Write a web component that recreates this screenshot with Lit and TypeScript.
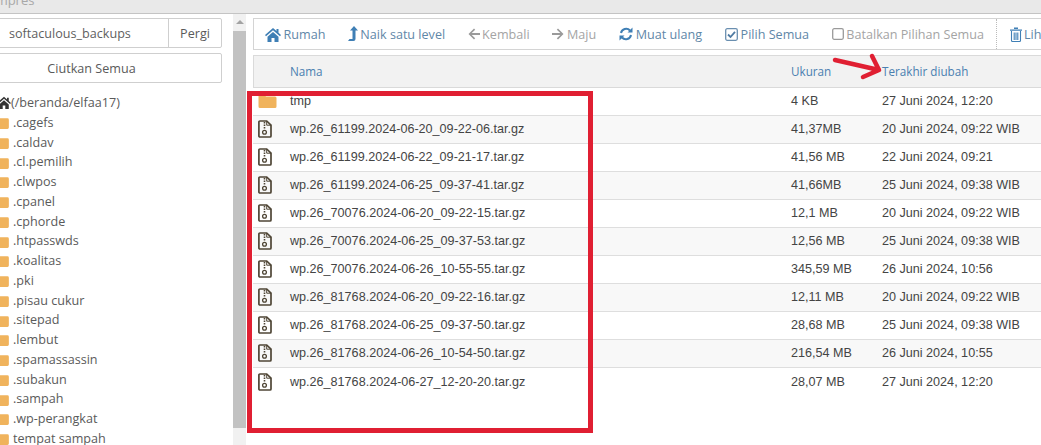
import { LitElement, html, css, svg } from "lit";
import { customElement } from "lit/decorators.js";

const folders = [".cagefs",".caldav",".cl.pemilih",".clwpos",".cpanel",".cphorde",".htpasswds",".koalitas",".pki",".pisau cukur",".sitepad",".lembut",".spamassassin",".subakun",".sampah",".wp-perangkat","tempat sampah"];
const files: [string,string,string][] = [
["wp.26_61199.2024-06-20_09-22-06.tar.gz","41,37MB","20 Juni 2024, 09:22 WIB"],
["wp.26_61199.2024-06-22_09-21-17.tar.gz","41,56 MB","22 Juni 2024, 09:21"],
["wp.26_61199.2024-06-25_09-37-41.tar.gz","41,66MB","25 Juni 2024, 09:38 WIB"],
["wp.26_70076.2024-06-20_09-22-15.tar.gz","12,1 MB","20 Juni 2024, 09:22 WIB"],
["wp.26_70076.2024-06-25_09-37-53.tar.gz","12,56 MB","25 Juni 2024, 09:38 WIB"],
["wp.26_70076.2024-06-26_10-55-55.tar.gz","345,59 MB","26 Juni 2024, 10:56"],
["wp.26_81768.2024-06-20_09-22-16.tar.gz","12,11 MB","20 Juni 2024, 09:22 WIB"],
["wp.26_81768.2024-06-25_09-37-50.tar.gz","28,68 MB","25 Juni 2024, 09:38 WIB"],
["wp.26_81768.2024-06-26_10-54-50.tar.gz","216,54 MB","26 Juni 2024, 10:55"],
["wp.26_81768.2024-06-27_12-20-20.tar.gz","28,07 MB","27 Juni 2024, 12:20"],
];

const folderIcon = (w:number,h:number)=>html`<svg class="fi" width=${w} height=${h} viewBox="0 0 18 14"><path fill="#f0b35c" d="M0 2a1.500 1.500 0 0 1 1.500-1.500h4L7.500 2.500H16.500A1.500 1.500 0 0 1 18 4v8.500A1.500 1.500 0 0 1 16.500 14H1.500A1.500 1.500 0 0 1 0 12.500Z"/></svg>`;
const zipIcon = html`<svg class="fi" width="14" height="18" viewBox="0 0 14 18"><path fill="none" stroke="#4f4636" stroke-width="1.700" d="M1.900 1h6.800l4.300 4.200V16a1 1 0 0 1-1 1H1.900a1 1 0 0 1-1-1V2a1 1 0 0 1 1-1Z"/><path fill="none" stroke="#4f4636" stroke-width="1" d="M8.700 1v4.200H13"/><path stroke="#4f4636" stroke-width="1.600" stroke-dasharray="1.500 1" d="M6.500 2v7"/><circle cx="6.500" cy="12.300" r="1.900" fill="none" stroke="#4f4636" stroke-width="1.300"/></svg>`;

const blue = "#3f7fb5";
const I = (w:number,h:number,vb:string,c:string,body:any)=>html`<svg class="fi" width=${w} height=${h} viewBox=${vb} fill=${c}>${body}</svg>`;
const homePath = svg`<path d="M8 1 0 8l1 1.200L8 3.200l7 6 1-1.200-2.500-2.200V2h-2v2L8 1ZM2.500 9.800V15h4v-4h3v4h4V9.800L8 5 2.500 9.800Z"/>`;
const icons = {
  home: I(16,15,"0 0 16 15",blue,homePath),
  up: I(10,16,"0 0 10 16",blue,svg`<path d="M6 0 10 4.500H7.500V13a2 2 0 0 1-2 2H0l1.500-2H4.500V4.500H2Z"/>`),
  back: I(12,12,"0 0 12 12","#9a9a9a",svg`<path d="M6 .5 7.200 1.700 3.700 5H12v2H3.700l3.500 3.300L6 11.500.5 6Z"/>`),
  fwd: I(12,12,"0 0 12 12","#9a9a9a",svg`<path d="M6 .5 4.800 1.700 8.300 5H0v2H8.300l-3.500 3.300L6 11.500 11.500 6Z"/>`),
  reload: I(14,14,"0 0 14 14",blue,svg`<path fill="none" stroke=${blue} stroke-width="2" d="M2 6A5.200 5.200 0 0 1 11 3.500M12 8A5.200 5.200 0 0 1 3 10.500"/><path d="M13.500 .5v5h-5ZM.5 13.500v-5h5Z"/>`),
  check: I(13,13,"0 0 13 13","#6a8fb0",svg`<rect x=".7" y=".7" width="11.600" height="11.600" rx="1.500" fill="none" stroke="#6a8fb0" stroke-width="1.300"/><path fill="none" stroke="#4f7ba3" stroke-width="1.800" d="M3 6.500l2.500 2.500L10 3.800"/>`),
  box: I(12,12,"0 0 12 12","#9a9a9a",svg`<rect x=".7" y=".7" width="10.600" height="10.600" rx="1.500" fill="none" stroke="#9a9a9a" stroke-width="1.300"/>`),
  trash: I(12,15,"0 0 12 15",blue,svg`<path d="M0 2.500h12v1.300H0ZM4 .5h4v1.500H4Z"/><path fill="none" stroke=${blue} stroke-width="1.100" d="M1.500 4v9.500a1 1 0 0 0 1 1h7a1 1 0 0 0 1-1V4M4.200 5.500v7.500M6 5.500v7.500M7.800 5.500v7.500"/>`),
};

@customElement("app-root")
export class AppRoot extends LitElement {
  static styles = css`
    :host { display:block; width:1041px; height:445px; overflow:hidden; position:relative; background:#fff; font-family:"Open Sans",sans-serif; color:#5a5a5a; }
    .top { height:13px; background:#e9e9e9; border-bottom:1px solid #c4c4c4; overflow:hidden; font-size:13px; line-height:7px; color:#a8a8a8; }
    .top span { display:block; margin:-3px 0 0 -8px; }
    .main { display:flex; height:431px; }
    .side { width:233px; flex:none; overflow:hidden; padding-top:4px; box-sizing:border-box; }
    .group { display:flex; width:232px; margin-left:-10px; height:30px; box-sizing:border-box; border:1px solid #cfcfcf; border-radius:2px; font-size:12.6px; align-items:center; }
    .inp { flex:1; padding-left:18px; color:#5f5f5f; }
    .go { width:52px; height:100%; border-left:1px solid #cfcfcf; display:flex; align-items:center; justify-content:center; }
    .collapse { margin-top:5px; margin-left:-39px; width:261px; justify-content:center; }
    .tree { margin-top:10px; font-size:12.6px; line-height:19.75px; }
    .homeRow { display:flex; align-items:center; margin-left:-3px; }
    .leaf { display:flex; align-items:center; gap:4px; margin-left:-1px; white-space:nowrap; }
    .leaf .fi { margin-left:-7px; }
    .fi { flex:none; display:block; }
    .scroll { width:13px; flex:none; background:#f1f1f1; position:relative; margin-right:7px; display:flex; flex-direction:column; }
    .arrow { height:17px; display:flex; justify-content:center; padding-top:6px; box-sizing:border-box; }
    .arrow i { width:0; height:0; border:4px solid transparent; border-top:0; border-bottom:4px solid #a3a3a3; }
    .thumb { height:397px; background:#c2c2c2; }
    .right { flex:1; min-width:0; padding-top:4px; overflow:hidden; }
    .bar { display:flex; height:32px; box-sizing:border-box; border:1px solid #d4d4d4; border-right:0; font-size:12.6px; align-items:center; padding-left:11px; white-space:nowrap; width:800px; }
    .btn { display:flex; align-items:center; gap:2.500px; color:#5f87a8; }
    .btn.off { color:#a4a4a4; }
    .sep { width:0; height:100%; border-left:1px dotted #bbb; }
    .w83 { width:83px; } .w120 { width:120px; } .w85 { width:85px; } .w67 { width:67px; }
    .w106 { width:106px; } .w107 { width:107px; } .w164 { width:164px; } .trash { margin-left:13px; }
    .head { margin-top:5px; height:33px; padding-bottom:1px; box-sizing:border-box; background:#f2f2f2; border:1px solid #dadada; border-width:1px 0 1px 1px; display:grid; grid-template-columns:501px 91px 1fr; align-items:center; font-size:11.700px; color:#4a7fb0; padding-left:36px; }
    .row { height:28px; padding-bottom:1px; box-sizing:border-box; display:grid; grid-template-columns:37px 501px 91px 1fr; align-items:center; font:12.6px "Liberation Sans",Arial,sans-serif; color:#444; border-bottom:1px solid #dedede; white-space:nowrap; }
    .row.alt { background:#f8f8f8; }
    .row.last { border-bottom:0; }
    .ic { padding-left:5px; }
    .mark { position:absolute; left:247px; top:91px; width:346px; height:342px; box-sizing:border-box; border:5px solid #e01f32; }
    .redarrow { position:absolute; left:832px; top:52px; }
  `;
  render() {
    const rows = [["tmp","4 KB","27 Juni 2024, 12:20"] as [string,string,string], ...files];
    return html`
      <div class="top"><span>Impres</span></div>
      <div class="main">
        <div class="side">
          <div class="group"><div class="inp">softaculous_backups</div><div class="go">Pergi</div></div>
          <div class="group collapse">Ciutkan Semua</div>
          <div class="tree">
            <div class="homeRow">${I(14,13,"0 0 16 15","#333",homePath)}<span>(/beranda/elfaa17)</span></div>
            ${folders.map(f=>html`<div class="leaf">${folderIcon(17,13)}<span>${f}</span></div>`)}
          </div>
        </div>
        <div class="scroll"><div class="arrow"><i></i></div><div class="thumb"></div></div>
        <div class="right">
          <div class="bar">
            <div class="btn w83">${icons.home}Rumah</div>
            <div class="btn w120">${icons.up}Naik satu level</div>
            <div class="btn off w85">${icons.back}Kembali</div>
            <div class="btn off w67">${icons.fwd}Maju</div>
            <div class="btn w106">${icons.reload}Muat ulang</div>
            <div class="btn w107">${icons.check}Pilih Semua</div>
            <div class="btn off w164">${icons.box}Batalkan Pilihan Semua</div>
            <div class="sep"></div>
            <div class="btn trash">${icons.trash}Lihat</div>
          </div>
          <div class="head"><span>Nama</span><span>Ukuran</span><span>Terakhir diubah</span></div>
          ${rows.map((r,i)=>html`<div class="row ${i%2?"alt":""} ${i===rows.length-1?"last":""}">
            <div class="ic">${i?zipIcon:folderIcon(19,14)}</div><span>${r[0]}</span><span>${r[1]}</span><span>${r[2]}</span></div>`)}
        </div>
      </div>
      <div class="mark"></div>
      <svg class="redarrow" width="52" height="30" viewBox="0 0 52 30"><path fill="none" stroke="#e01f32" stroke-width="4.500" stroke-linecap="round" stroke-linejoin="round" d="M3 8 47 18M40 4 47 18 31 25"/></svg>
    `;
  }
}
